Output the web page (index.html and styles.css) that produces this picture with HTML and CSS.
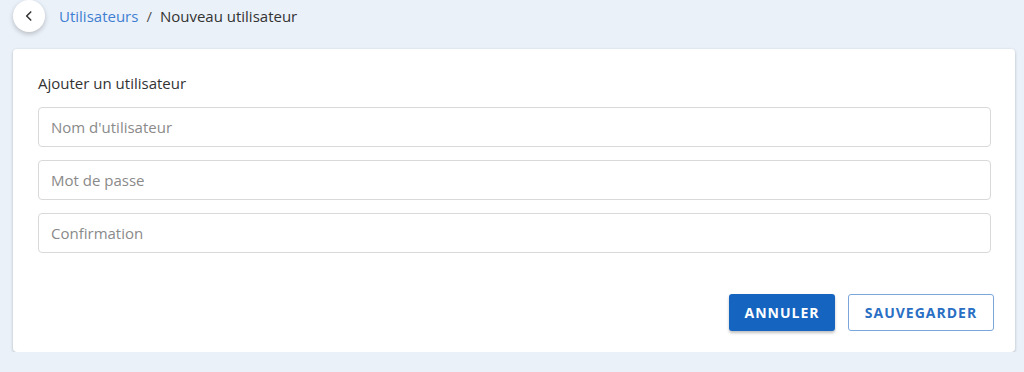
FILE: index.html
```html
<!DOCTYPE html>
<html lang="fr">
<head>
    <meta charset="UTF-8">
    <title>Nouveau utilisateur</title>
    <link rel="stylesheet" href="styles.css">
</head>
<body>
<!-- fil d'ariane -->
<div class="crumbs">
    <button class="back-btn" type="button">
        <svg width="14" height="14" viewBox="0 0 24 24"><path d="M15 5l-7 7 7 7" fill="none" stroke="#333" stroke-width="2.6" stroke-linecap="round" stroke-linejoin="round"/></svg>
    </button>
    <a class="crumb-link" href="#">Utilisateurs</a>
    <span class="crumb-sep">/</span>
    <span class="crumb-current">Nouveau utilisateur</span>
</div>

<!-- formulaire -->
<div class="card">
    <div class="card-title">Ajouter un utilisateur</div>
    <form class="user-form">
        <input type="text" placeholder="Nom d'utilisateur">
        <input type="password" placeholder="Mot de passe">
        <input type="password" placeholder="Confirmation">
        <div class="actions">
            <button type="button" class="btn btn-primary">ANNULER</button>
            <button type="submit" class="btn btn-outline">SAUVEGARDER</button>
        </div>
    </form>
</div>
</body>
</html>
```

FILE: styles.css
```css
body {
    font-family: "Open Sans", "Noto Sans", sans-serif;
    background-color: #ebf1f9;
    margin: 0;
    padding: 0;
}

/* fil d'ariane */
.crumbs {
    display: flex;
    align-items: center;
    height: 32px;
    padding-left: 13px;
    font-size: 15px;
}
.back-btn {
    width: 32px;
    height: 32px;
    border: none;
    border-radius: 50%;
    background-color: #ffffff;
    box-shadow: 0 2px 5px rgba(0,0,0,0.22);
    display: flex;
    align-items: center;
    justify-content: center;
    padding: 0;
    margin-right: 14px;
    cursor: pointer;
}
.crumb-link {
    color: #3f7fd1;
    text-decoration: none;
}
.crumb-sep {
    color: #555555;
    margin: 0 8px;
}
.crumb-current {
    color: #333333;
}

/* carte */
.card {
    margin: 17px 9px 0 13px;
    background-color: #ffffff;
    border-radius: 4px;
    box-shadow: 0 1px 3px rgba(0,0,0,0.25);
    padding: 24px 24px 21px 25px;
}
.card-title {
    font-size: 15px;
    color: #333333;
    margin-bottom: 14px;
}
.user-form {
    display: flex;
    flex-direction: column;
    gap: 13px;
}
.user-form input {
    height: 40px;
    box-sizing: border-box;
    border: 1px solid #d9d9d9;
    border-radius: 4px;
    padding: 0 12px;
    font-family: inherit;
    font-size: 15px;
    color: #333333;
    outline: none;
}
.user-form input::placeholder {
    color: #8a8a8a;
}
.actions {
    display: flex;
    justify-content: flex-end;
    gap: 13px;
    margin-top: 28px;
    margin-right: -3px;
}
.btn {
    height: 37px;
    border-radius: 3px;
    font-family: inherit;
    font-size: 14px;
    font-weight: 700;
    letter-spacing: 1px;
    cursor: pointer;
}
.btn-primary {
    width: 106px;
    background-color: #1565c0;
    color: #ffffff;
    border: none;
    box-shadow: 0 2px 3px rgba(0,0,0,0.25);
}
.btn-outline {
    width: 146px;
    background-color: #ffffff;
    color: #2a6fc4;
    border: 1px solid #7aa6dc;
}
```
